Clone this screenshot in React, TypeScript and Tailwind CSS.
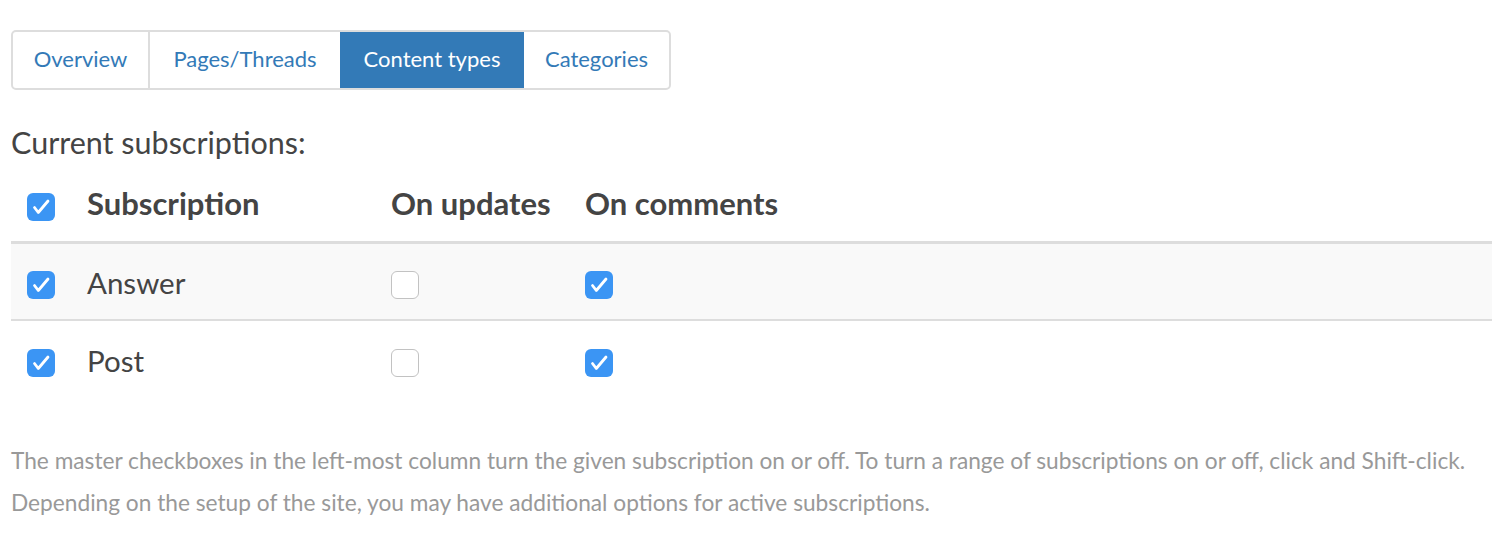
const font = { fontFamily: '"Lato", "Liberation Sans", sans-serif' };

function Box({ checked }: { checked: boolean }) {
  if (!checked) {
    return (
      <span className="inline-block box-border w-[28px] h-[28px] rounded-[6px] border-[1.5px] border-[#c2c2c2] bg-white align-middle" />
    );
  }
  return (
    <span className="inline-flex items-center justify-center w-[28px] h-[28px] rounded-[6px] bg-[#3b95f4] align-middle">
      <svg width="28" height="28" viewBox="0 0 28 28" fill="none">
        <path d="M7.5 14.5 L11.3 19.5 L21 8" stroke="white" strokeWidth="2.8" strokeLinecap="round" strokeLinejoin="round" />
      </svg>
    </span>
  );
}

const tabs = [
  { label: 'Overview', cls: 'w-[137px] border-r-2 border-[#ddd] text-[#337ab7]' },
  { label: 'Pages/Threads', cls: 'w-[190px] text-[#337ab7]' },
  { label: 'Content types', cls: 'w-[184px] -my-[2px] bg-[#337ab7] text-white' },
  { label: 'Categories', cls: 'w-[145px] text-[#337ab7]' },
];

const rows = [
  { name: 'Answer', updates: false, comments: true },
  { name: 'Post', updates: false, comments: true },
];

export default function App() {
  return (
    <div className="min-h-screen bg-white pl-[11px] pt-[30px] text-[#444]" style={font}>
      <div className="inline-flex h-[60px] rounded-[5px] border-2 border-[#ddd] overflow-hidden">
        {tabs.map((t) => (
          <div key={t.label} className={'flex items-center justify-center pb-[3px] text-[22px] ' + t.cls}>
            {t.label}
          </div>
        ))}
      </div>

      <div className="mt-[30px] text-[30.5px] leading-[44px]">Current subscriptions:</div>

      <table className="w-full mt-[2px] border-collapse">
        <thead>
          <tr className="border-b-[3px] border-[#ddd] text-[31px]">
            <th className="h-[76px] w-[60px] pl-[16px] p-0 text-left align-middle">
              <Box checked />
            </th>
            <th className="w-[304px] pl-[16px] text-left font-bold">Subscription</th>
            <th className="w-[194px] pl-[16px] text-left font-bold">On updates</th>
            <th className="pl-[16px] text-left font-bold">On comments</th>
          </tr>
        </thead>
        <tbody className="text-[29.5px]">
          {rows.map((r, i) => (
            <tr key={r.name} className={i === 0 ? 'bg-[#f9f9f9] border-b-2 border-[#ddd]' : ''}>
              <td className="h-[78px] pl-[16px] align-middle">
                <Box checked />
              </td>
              <td className="pl-[16px] pt-[3px]">{r.name}</td>
              <td className="pl-[16px]">
                <Box checked={r.updates} />
              </td>
              <td className="pl-[16px]">
                <Box checked={r.comments} />
              </td>
            </tr>
          ))}
        </tbody>
      </table>

      <div className="mt-[42px] text-[22.7px] leading-[42px] text-[#999]">
        <p>The master checkboxes in the left-most column turn the given subscription on or off. To turn a range of subscriptions on or off, click and Shift-click.</p>
        <p>Depending on the setup of the site, you may have additional options for active subscriptions.</p>
      </div>
    </div>
  );
}
